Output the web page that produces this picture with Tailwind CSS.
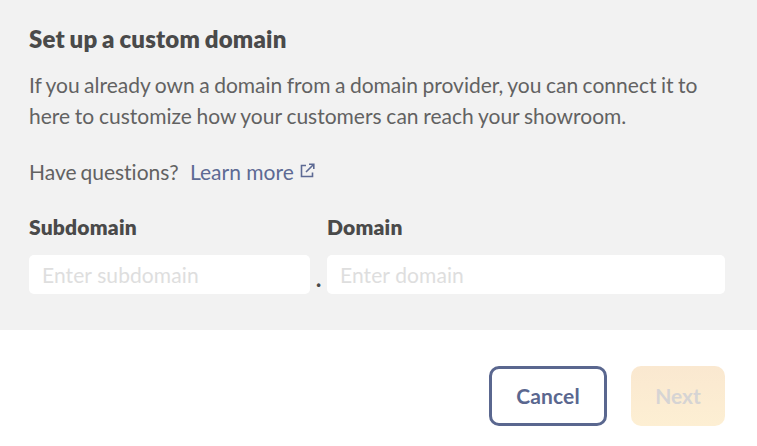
<!DOCTYPE html>
<html lang="en">
<head>
    <meta charset="UTF-8">
    <meta name="viewport" content="width=device-width, initial-scale=1.0">
    <title>Custom domain</title>
    <script src="https://cdn.jsdelivr.net/npm/@tailwindcss/browser@4"></script>
</head>
<body class="h-screen overflow-hidden bg-white font-['Lato',sans-serif] text-[#626262] [font-variant-ligatures:none]">
    <!-- Domain settings -->
    <main class="h-[330px] bg-[#f2f2f2] pl-[29px] pr-8 pt-[23px]">
        <h1 class="text-[24px] leading-8 font-extrabold tracking-[0.18px] text-[#4a4a4a] [word-spacing:-1px]">Set up a custom domain</h1>
        <p class="mt-[14px] text-[21px] leading-[31px] whitespace-nowrap">
            <span class="[word-spacing:-0.9px]">If you already own a domain from a domain provider, you can connect it to</span><br>
            <span class="[word-spacing:-0.65px]">here to customize how your customers can reach your showroom.</span>
        </p>
        <div class="mt-[25px] flex text-[21px] leading-[31px]">
            <span class="w-[150px] whitespace-nowrap [word-spacing:-1.5px]">Have questions?</span>
            <a href="#" class="ml-[11px] flex text-[#5d6a94]">
                Learn more
                <svg class="ml-[6px] mt-[7px] h-4 w-4" viewBox="0 0 16 16" fill="none" stroke="currentColor" stroke-width="1.6">
                    <path d="M6 2.5H1.5v11h11V9.5"/>
                    <path d="M9 1.2H13.8V6M13.8 1.2 6 9"/>
                </svg>
            </a>
        </div>
        <form class="mt-6 flex items-end">
            <div class="w-[281px]">
                <label for="subdomain" class="block text-[21px] leading-[31px] font-extrabold tracking-[0.2px] text-[#4a4a4a]">Subdomain</label>
                <input id="subdomain" type="text" placeholder="Enter subdomain" class="mt-[13px] block h-[39px] w-full rounded-[5px] bg-white px-[13px] text-[21px] tracking-[0.1px] placeholder:text-[#dedede]">
            </div>
            <span class="w-[17px] text-center text-[22px] leading-[31px] font-black text-[#4a4a4a]">.</span>
            <div class="flex-1">
                <label for="domain" class="block text-[21px] leading-[31px] font-extrabold tracking-[0.2px] text-[#4a4a4a]">Domain</label>
                <input id="domain" type="text" placeholder="Enter domain" class="mt-[13px] block h-[39px] w-full rounded-[5px] bg-white px-[13px] text-[21px] tracking-[0.1px] placeholder:text-[#dedede]">
            </div>
        </form>
    </main>
    <!-- Actions -->
    <footer class="flex justify-end gap-6 pr-8 pt-9">
        <button type="button" class="h-[60px] w-[118px] rounded-[10px] border-3 border-[#5a678f] text-[21px] font-bold tracking-[0.15px] text-[#5a678f]">Cancel</button>
        <button type="button" class="h-[60px] w-[94px] rounded-[10px] bg-linear-to-b from-[#fae8d0] to-[#fdefd3] text-[21px] font-bold text-[#d6d4d4]" disabled>Next</button>
    </footer>
</body>
</html>
